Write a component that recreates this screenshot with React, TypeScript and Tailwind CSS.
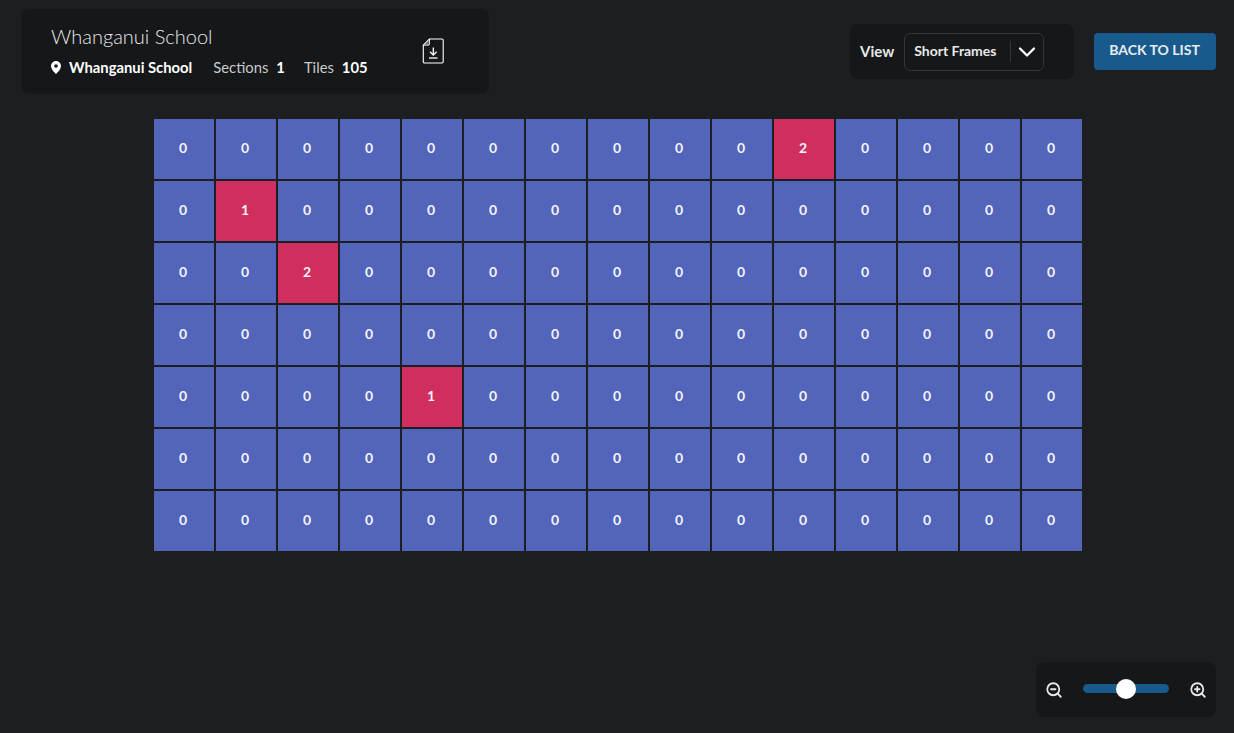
import { ChevronDown, ZoomIn, ZoomOut } from 'lucide-react';

const COLS = 15;
const ROWS = 7;
// row,col -> count for the tiles that have frames
const hits: Record<string, number> = {
  '0-10': 2,
  '1-1': 1,
  '2-2': 2,
  '4-4': 1,
};

function FileDownload() {
  return (
    <svg width="22" height="26" viewBox="0 0 22 26" fill="none" stroke="currentColor" className="mb-[2px] text-white">
      <path d="M7.5 1h12.5a1.2 1.2 0 0 1 1.2 1.2v21.6a1.2 1.2 0 0 1-1.2 1.2H2.5a1.2 1.2 0 0 1-1.2-1.2V7.2z" strokeWidth="1.1" />
      <path d="M7.5 1v5a1.2 1.2 0 0 1-1.2 1.2H1.3z" fill="#6d6e70" strokeWidth="0.8" />
      <path d="M11.3 9.5v7.5M8 13.8l3.3 3.3 3.3-3.3" strokeWidth="1.3" />
      <path d="M7 20h8.5" strokeWidth="1.3" />
    </svg>
  );
}

function Pin() {
  return (
    <svg width="10" height="13" viewBox="0 0 10 13" className="mr-[8px]">
      <path
        fill="#fff"
        fillRule="evenodd"
        d="M5 0a5 5 0 0 1 5 5c0 3-3 6-5 8-2-2-5-5-5-8a5 5 0 0 1 5-5zm0 3.2a1.8 1.8 0 1 0 0 3.6 1.8 1.8 0 0 0 0-3.6z"
      />
    </svg>
  );
}

export default function App() {
  return (
    <div className="min-h-screen h-[733px] flex flex-col bg-[#1c1e22] text-white font-['Lato',sans-serif] overflow-hidden">
      <header className="flex items-start pl-[21px] pr-[18px] pt-[9px]">
        <div className="w-[468px] h-[85px] bg-[#151719] rounded-lg flex items-center pl-[30px] pr-[45px] justify-between">
          <div className="pb-[3px]">
            <h1 className="text-[20px] leading-[26px] font-light text-[#e8e9ea]">Whanganui School</h1>
            <div className="flex items-center mt-[8px] text-[14.8px] leading-[20px]">
              <Pin />
              <span className="font-bold">Whanganui School</span>
              <span className="ml-[21px] text-[#c9cacc]">Sections</span>
              <span className="ml-[8px] font-bold">1</span>
              <span className="ml-[19px] text-[#c9cacc]">Tiles</span>
              <span className="ml-[8px] font-bold">105</span>
            </div>
          </div>
          <FileDownload />
        </div>

        <div className="ml-auto mt-[15px] w-[224px] h-[55px] bg-[#151719] rounded-lg flex items-center pl-[10px]">
          <span className="text-[15px] font-bold text-[#e8e9ea]">View</span>
          <div className="ml-[10px] w-[140px] h-[38px] border border-[#33353a] rounded-md flex items-center pl-[9px]">
            <span className="text-[14px] font-bold text-[#e8e9ea] w-[96px] pb-[2px]">Short Frames</span>
            <span className="w-px h-[21px] bg-[#33353a]" />
            <ChevronDown size={28} strokeWidth={2} className="ml-[2px] text-white" />
          </div>
        </div>

        <button className="ml-[20px] mt-[24px] w-[122px] h-[37px] bg-[#185a8c] rounded text-[14px] font-bold text-[#e8edf2] pb-[4px] pr-[1px]">
          BACK TO LIST
        </button>
      </header>

      <main className="mt-[25px] flex justify-center">
        <div className="grid grid-cols-[repeat(15,60px)] grid-rows-[repeat(7,60px)] gap-[2px] ml-[2px]">
          {Array.from({ length: ROWS * COLS }).map((_, i) => {
            const key = `${Math.floor(i / COLS)}-${i % COLS}`;
            const n = hits[key] ?? 0;
            return (
              <div
                key={key}
                className={`flex items-center justify-center pr-[2px] pb-[4px] text-[14px] font-bold text-[#f2f3f8] ${n > 0 ? 'bg-[#cf2e5e]' : 'bg-[#5265bb]'}`}
              >
                {n}
              </div>
            );
          })}
        </div>
      </main>

      <footer className="mt-auto flex justify-end pr-[18px] pb-[16px]">
        <div className="w-[180px] h-[55px] bg-[#151719] rounded-lg flex items-center pl-[9px] pr-[9px] justify-between">
          <ZoomOut size={18} strokeWidth={2.4} className="text-[#e8e9ea]" />
          <div className="relative w-[86px] h-[9px] mb-[2px] rounded-full bg-[#185a8c]">
            <div className="absolute left-[33px] top-[-5px] w-[20px] h-[20px] rounded-full bg-white" />
          </div>
          <ZoomIn size={18} strokeWidth={2.4} className="text-[#e8e9ea]" />
        </div>
      </footer>
    </div>
  );
}
